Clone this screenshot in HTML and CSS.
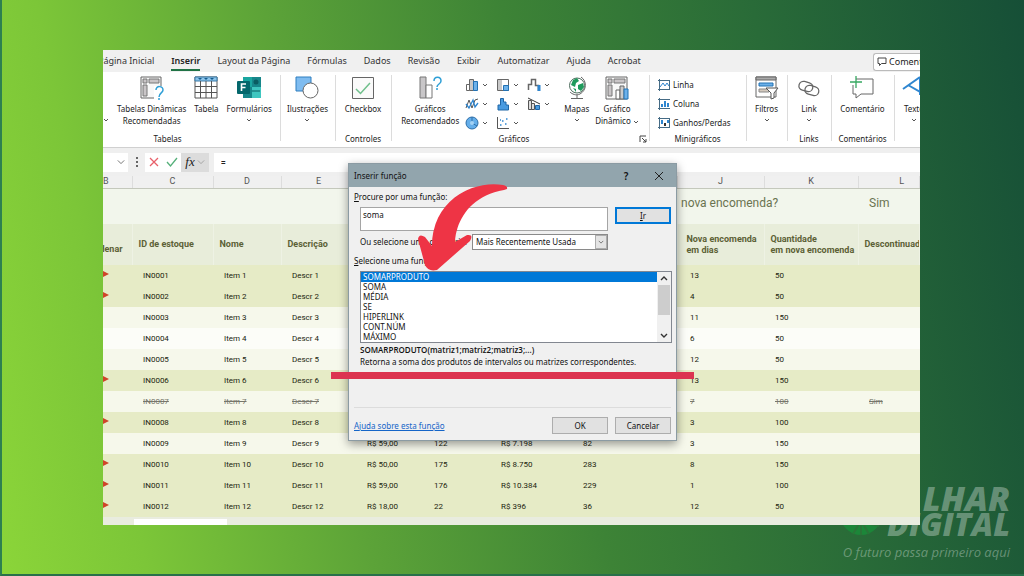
FILE: index.html
```html
<!DOCTYPE html>
<html lang="pt-BR">
<head>
    <meta charset="UTF-8">
    <meta name="viewport" content="width=device-width, initial-scale=1.0">
    <title>Excel - Inserir função</title>
    <link rel="stylesheet" href="styles.css">
</head>
<body>
    <!-- Shared chevron -->
    <svg class="defs" width="0" height="0">
        <symbol id="chev" viewBox="0 0 6 4"><path d="M1 1l2 2 2-2" fill="none" stroke="currentColor"/></symbol>
    </svg>

    <div class="brand">
        <svg class="brand-ball" viewBox="0 0 44 44"><circle cx="22" cy="22" r="21" fill="#17923a"/><path d="M4 26l36 8M10 8l20 34M34 8L14 42M22 1v42" stroke="#2b7a38" stroke-width="2"/></svg>
        <div class="brand-name brand-top">LHAR</div>
        <div class="brand-name">DIGITAL</div>
        <div class="brand-tag">O futuro passa primeiro aqui</div>
    </div>

    <main class="window">
        <nav class="tabs">
            <a href="#">Página Inicial</a>
            <a href="#" class="active">Inserir</a>
            <a href="#">Layout da Página</a>
            <a href="#">Fórmulas</a>
            <a href="#">Dados</a>
            <a href="#">Revisão</a>
            <a href="#">Exibir</a>
            <a href="#">Automatizar</a>
            <a href="#">Ajuda</a>
            <a href="#">Acrobat</a>
            <button class="comments-btn">
                <svg width="10" height="10" viewBox="0 0 10 10"><path d="M1 1h8v5.500H4.500L2.500 8.500v-2H1z" fill="none" stroke="#444"/></svg>
                Comentários
            </button>
        </nav>

        <div class="ribbon">
            <section class="group group-tables">
                <div class="items">
                    <button class="tool tool-cut" aria-label="Tabela Dinâmica"><svg class="chev"><use href="#chev"/></svg></button>
                    <button class="tool">
                        <svg class="icon" viewBox="0 0 24 24">
                            <path d="M1 1h20v21H1z" fill="#f8f8f8" stroke="#666"/>
                            <path d="M3 3h4v4H3zM9 3h10v4H9zM3 9h4v11H3z" fill="#c9c5c7" stroke="#777"/>
                            <path d="M14 10h11v14H14z" fill="#fff"/>
                            <path d="M16 14c0-5 7-4 7 0 0 3-4 3-4 7M19 22v2" fill="none" stroke="#2f9fd6" stroke-width="1.500"/>
                        </svg>
                        <span>Tabelas Dinâmicas<br>Recomendadas</span>
                    </button>
                    <button class="tool">
                        <svg class="icon" viewBox="0 0 24 24">
                            <path d="M1 1h22v21H1z" fill="#fff" stroke="#555"/>
                            <path d="M1 1h22v4H1z" fill="#8cc4ea" stroke="#3b7aa8"/>
                            <path d="M1 10.500h22M1 16.500h22M6.500 5v17M12 5v17M17.500 5v17" stroke="#555" fill="none"/>
                            <path d="M4 2l2 2 2-2zM10 2l2 2 2-2zM16 2l2 2 2-2z" fill="#135b8e"/>
                        </svg>
                        <span>Tabela</span>
                    </button>
                    <button class="tool">
                        <svg class="icon" viewBox="0 0 24 24">
                            <path d="M6 1h18v21H6z" fill="#17868a"/>
                            <path d="M6 1h9v10H6z" fill="#1aa6a0"/><path d="M15 11h9v11h-9z" fill="#3fc6c0"/>
                            <circle cx="19" cy="6" r="2.500" fill="#0a5d62"/><path d="M15 15h8" stroke="#0a5d62"/>
                            <rect x="0" y="5" width="13" height="13" rx="1" fill="#04676c"/>
                            <path d="M4.500 15V8H9M4.500 11.500h4" fill="none" stroke="#fff" stroke-width="1.600"/>
                        </svg>
                        <span>Formulários</span>
                        <svg class="chev"><use href="#chev"/></svg>
                    </button>
                </div>
                <h2>Tabelas</h2>
            </section>

            <section class="group group-illus">
                <div class="items">
                    <button class="tool">
                        <svg class="icon" viewBox="0 0 24 24">
                            <path d="M1 1h15v14H1z" fill="#7fbcf0" stroke="#2f7fc0"/>
                            <circle cx="15.500" cy="14.500" r="7.500" fill="#fff" stroke="#666"/>
                        </svg>
                        <span>Ilustrações</span>
                        <svg class="chev"><use href="#chev"/></svg>
                    </button>
                </div>
            </section>

            <section class="group group-controls">
                <div class="items">
                    <button class="tool">
                        <svg class="icon" viewBox="0 0 24 24">
                            <path d="M1.500 1.500h21v21h-21z" fill="#fafafa" stroke="#666"/>
                            <path d="M5 13l4.500 4.500L19 7" fill="none" stroke="#6fbf8b" stroke-width="1.500"/>
                        </svg>
                        <span>Checkbox</span>
                    </button>
                </div>
                <h2>Controles</h2>
            </section>

            <section class="group group-charts">
                <div class="items">
                    <button class="tool">
                        <svg class="icon" viewBox="0 0 24 24">
                            <path d="M2 1h6v21H2z" fill="#c8c6c8" stroke="#777"/>
                            <path d="M8 9h6v13H8z" fill="#fff" stroke="#777"/>
                            <path d="M16 5c0-5 7-5 7 0 0 3-4 3-4 6M19 12v2" fill="none" stroke="#2f9fd6" stroke-width="1.500"/>
                        </svg>
                        <span>Gráficos<br>Recomendados</span>
                    </button>
                    <div class="chart-grid">
                        <button aria-label="Colunas"><svg viewBox="0 0 14 14"><path d="M1.500 6.500h3v6h-3z" fill="#fff" stroke="#666"/><path d="M4.500 1.500h4v11h-4z" fill="#c8c8c8" stroke="#666"/><path d="M8.500 3.500h4v9h-4z" fill="#6db1ea" stroke="#2272b4"/></svg><svg class="chev"><use href="#chev"/></svg></button>
                        <button aria-label="Hierarquia"><svg viewBox="0 0 14 14"><path d="M1.500 1.500h11v11h-11z" fill="#fff" stroke="#666"/><path d="M2 2h4v10H2z" fill="#c8c8c8"/><path d="M7.500 7.500h5v5h-5z" fill="#6db1ea" stroke="#2272b4"/></svg><svg class="chev"><use href="#chev"/></svg></button>
                        <button aria-label="Cascata"><svg viewBox="0 0 14 14"><path d="M1.500 12V6.500h3V1.500h4v6h3V13" fill="none" stroke="#666" stroke-width="1.500"/><path d="M12 7v6" stroke="#2f86d0" stroke-width="3"/></svg><svg class="chev"><use href="#chev"/></svg></button>
                        <button aria-label="Linhas"><svg viewBox="0 0 14 14"><path d="M1 11l3-8 3 8 3-8 3-1" fill="none" stroke="#555"/><path d="M1 7l3 4 4-8 2 7 3-4" fill="none" stroke="#2f86d0" stroke-width="1.300"/></svg><svg class="chev"><use href="#chev"/></svg></button>
                        <button aria-label="Estatística"><svg viewBox="0 0 14 14"><path d="M2 13V8h2.500V1.500h3V5H10v3h2.500v5z" fill="#4a9be0" stroke="#1f66a6"/></svg><svg class="chev"><use href="#chev"/></svg></button>
                        <button aria-label="Combinação"><svg viewBox="0 0 14 14"><path d="M1.500 3.500h3v9h-3zM4.500 6.500h3v6h-3z" fill="#ddd" stroke="#555"/><path d="M8.500 8.500h4v4h-4z" fill="#4a9be0" stroke="#1f66a6"/><path d="M1 1l6 3 6 3" fill="none" stroke="#333"/></svg><svg class="chev"><use href="#chev"/></svg></button>
                        <button aria-label="Pizza"><svg viewBox="0 0 14 14"><circle cx="7" cy="7" r="6" fill="#64aeea" stroke="#2c6ea8"/><path d="M7 1v6l5 3" fill="none" stroke="#2c6ea8"/><circle cx="7" cy="7" r="2" fill="#a4d2f5"/></svg><svg class="chev"><use href="#chev"/></svg></button>
                        <button aria-label="Dispersão"><svg viewBox="0 0 14 14"><path d="M1.500 1v11.500H13" fill="none" stroke="#555"/><path d="M4 9h1.500M6 5h1.500M9 8h1.500M10 3h1.500M4 4h1" stroke="#2f86d0" stroke-width="1.500"/></svg><svg class="chev"><use href="#chev"/></svg></button>
                    </div>
                    <button class="tool">
                        <svg class="icon" viewBox="0 0 24 24">
                            <circle cx="12" cy="9.500" r="7.500" fill="#fff" stroke="#4c6b5c"/>
                            <path d="M8 4l4-2 2 3-3 2-1 4-4-2zM13 9l5-2 1 4-3 4-3-2zM8 12l3 1 0 3z" fill="#1f9a5c"/>
                            <path d="M16 1c6 4 6 13-1 17-4 2-8 0-10-2M12 19v3M6 22.500h12" fill="none" stroke="#666"/>
                        </svg>
                        <span>Mapas</span>
                        <svg class="chev"><use href="#chev"/></svg>
                    </button>
                    <button class="tool">
                        <svg class="icon" viewBox="0 0 24 24">
                            <path d="M1 1h21v22H1z" fill="#f8f8f8" stroke="#666"/>
                            <path d="M3 3h4v4H3zM9 3h11v4H9zM3 9h4v11H3z" fill="#c9c5c7" stroke="#777"/>
                            <path d="M11 14h4v9h-4z" fill="#fff" stroke="#666"/><path d="M15 10h4v13h-4z" fill="#ccc" stroke="#666"/>
                            <path d="M19 13h4v10h-4z" fill="#6db1ea" stroke="#2272b4"/>
                        </svg>
                        <span>Gráfico<br>Dinâmico <svg class="chev"><use href="#chev"/></svg></span>
                    </button>
                </div>
                <h2>Gráficos</h2>
                <button class="launcher" aria-label="Ver todos os gráficos"><svg viewBox="0 0 8 8"><path d="M1 7V1h6M3 3l4 4M7 4v3H4" fill="none" stroke="#444"/></svg></button>
            </section>

            <section class="group group-spark">
                <div class="items items-col">
                    <button><svg viewBox="0 0 12 12"><path d="M1.500 0v12M0 1.500h12M0 10.500h12M11.500 1v10" stroke="#456b85" fill="none"/><path d="M2 8l3-4 2 3 2-3 2 3" fill="none" stroke="#2f86d0"/></svg>Linha</button>
                    <button><svg viewBox="0 0 12 12"><path d="M1.500 0v12M0 1.500h12M0 10.500h12" stroke="#456b85" fill="none"/><path d="M4 9V6M7 9V3M10 9V5" stroke="#2f86d0" stroke-width="2"/></svg>Coluna</button>
                    <button><svg viewBox="0 0 12 12"><path d="M1.500 0v12M0 1.500h12M0 10.500h12M11.500 1v10" stroke="#456b85" fill="none"/><path d="M4 7V3M10 6V3" stroke="#2f86d0" stroke-width="2"/><path d="M7 9V6" stroke="#333" stroke-width="2"/></svg>Ganhos/Perdas</button>
                </div>
                <h2>Minigráficos</h2>
            </section>

            <section class="group group-filters">
                <div class="items">
                    <button class="tool">
                        <svg class="icon" viewBox="0 0 24 24">
                            <path d="M1 1h20v20H1z" fill="#fff" stroke="#666"/><path d="M1 1h20v3H1z" fill="#aaa" stroke="#666"/>
                            <path d="M4 7h14v3H4z" fill="#6db1ea" stroke="#2272b4"/><path d="M4 13h10v3H4z" fill="#d4c9bd" stroke="#888"/>
                            <path d="M11 12h12l-4 5v5l-3 1v-6z" fill="#fff" stroke="#555"/>
                        </svg>
                        <span>Filtros</span>
                        <svg class="chev"><use href="#chev"/></svg>
                    </button>
                </div>
            </section>

            <section class="group group-links">
                <div class="items">
                    <button class="tool">
                        <svg class="icon" viewBox="0 0 24 24">
                            <rect x="2" y="6" width="14" height="9" rx="4.500" transform="rotate(15 9 10)" fill="none" stroke="#666" stroke-width="1.300"/>
                            <rect x="8" y="10" width="14" height="9" rx="4.500" transform="rotate(15 15 14)" fill="none" stroke="#666" stroke-width="1.300"/>
                        </svg>
                        <span>Link</span>
                        <svg class="chev"><use href="#chev"/></svg>
                    </button>
                </div>
                <h2>Links</h2>
            </section>

            <section class="group group-comments">
                <div class="items">
                    <button class="tool">
                        <svg class="icon" viewBox="0 0 24 24">
                            <path d="M6 3h17v15H11l-5 4v-4H3V9" fill="#fff" stroke="#666"/>
                            <path d="M6 0v12M0 6h12" stroke="#37a862" stroke-width="1.300"/>
                        </svg>
                        <span>Comentário</span>
                    </button>
                </div>
                <h2>Comentários</h2>
            </section>

            <section class="group group-text">
                <div class="items">
                    <button class="tool">
                        <svg class="icon" viewBox="0 0 24 24"><path d="M1 13L18 1M6 9l14 8M18 1v18" fill="none" stroke="#2f86d0" stroke-width="2"/></svg>
                        <span>Texto</span>
                        <svg class="chev"><use href="#chev"/></svg>
                    </button>
                </div>
            </section>
        </div>

        <div class="formula-bar">
            <button class="name-box" aria-label="Caixa de nome"><svg viewBox="0 0 10 6"><path d="M1 1l4 4 4-4" fill="none" stroke="#555"/></svg></button>
            <svg class="dots" viewBox="0 0 2 10"><path d="M0 0h2v2H0zM0 4h2v2H0zM0 8h2v2H0z" fill="#666"/></svg>
            <div class="fx-box">
                <button aria-label="Cancelar edição"><svg viewBox="0 0 12 12"><path d="M2 2l8 8M10 2l-8 8" stroke="#e8606a" stroke-width="1.300"/></svg></button>
                <button aria-label="Inserir"><svg viewBox="0 0 12 12"><path d="M1 6l3.500 4L11 2" fill="none" stroke="#55b07a" stroke-width="1.300"/></svg></button>
                <button class="fx"><i>fx</i><svg viewBox="0 0 10 6"><path d="M1 1l4 4 4-4" fill="none" stroke="#999"/></svg></button>
            </div>
            <input class="formula" type="text" value="=" aria-label="Barra de fórmulas">
        </div>

        <table class="sheet">
            <colgroup>
                <col class="c-b"><col class="c-c"><col class="c-d"><col class="c-e"><col class="c-f"><col class="c-g"><col class="c-h"><col class="c-i"><col class="c-j"><col class="c-k"><col>
            </colgroup>
            <thead>
                <tr class="letters"><th class="letter-b">B</th><th>C</th><th>D</th><th>E</th><th>F</th><th>G</th><th>H</th><th>I</th><th>J</th><th>K</th><th class="letter-l">L</th></tr>
                <tr class="question"><td colspan="8"></td><td colspan="2">nova encomenda?</td><td class="answer">Sim</td></tr>
                <tr class="heads">
                    <th><div class="cut">Reordenar</div></th><th>ID de estoque</th><th>Nome</th><th>Descrição</th><th></th><th></th><th></th><th></th><th class="days">Nova encomenda<br>em dias</th><th>Quantidade<br>em nova encomenda</th><th>Descontinuado</th>
                </tr>
            </thead>
            <tbody id="rows"></tbody>
        </table>
        <div class="scroll-strip"><div class="scroll-thumb"></div></div>

        <div class="dialog" role="dialog" aria-labelledby="dialog-title">
            <div class="dialog-title">
                <span id="dialog-title">Inserir função</span>
                <button class="help" aria-label="Ajuda">?</button>
                <button aria-label="Fechar"><svg viewBox="0 0 10 10"><path d="M1 1l8 8M9 1L1 9" stroke="#222"/></svg></button>
            </div>
            <div class="dialog-body">
                <label for="search"><u>P</u>rocure por uma função:</label>
                <div class="search-row">
                    <textarea id="search">soma</textarea>
                    <button class="btn btn-default"><u>I</u>r</button>
                </div>
                <div class="category-row">
                    <label for="category">Ou selecione uma categoria:</label>
                    <div class="select-wrap">
                        <select id="category"><option>Mais Recentemente Usada</option></select>
                        <span class="select-arrow"><svg viewBox="0 0 8 5"><path d="M1 1l3 3 3-3" fill="none" stroke="#555"/></svg></span>
                    </div>
                </div>
                <div class="list-label" id="list-label"><u>S</u>elecione uma função:</div>
                <div class="listbox">
                    <ul role="listbox" aria-labelledby="list-label">
                        <li role="option" aria-selected="true" class="selected">SOMARPRODUTO</li>
                        <li role="option">SOMA</li>
                        <li role="option">MÉDIA</li>
                        <li role="option">SE</li>
                        <li role="option">HIPERLINK</li>
                        <li role="option">CONT.NÚM</li>
                        <li role="option">MÁXIMO</li>
                    </ul>
                    <div class="scrollbar">
                        <svg viewBox="0 0 8 5"><path d="M1 4l3-3 3 3" fill="none" stroke="#333" stroke-width="1.400"/></svg>
                        <div class="thumb"></div>
                        <svg viewBox="0 0 8 5"><path d="M1 1l3 3 3-3" fill="none" stroke="#333" stroke-width="1.400"/></svg>
                    </div>
                </div>
                <p class="syntax">SOMARPRODUTO(matriz1;matriz2;matriz3;...)</p>
                <p class="syntax-text">Retorna a soma dos produtos de intervalos ou matrizes correspondentes.</p>
                <div class="dialog-footer">
                    <a href="#">Ajuda sobre esta função</a>
                    <button class="btn">OK</button>
                    <button class="btn">Cancelar</button>
                </div>
            </div>
        </div>

        <!-- Annotations drawn over the dialog -->
        <svg class="arrow" viewBox="0 0 92 88"><path d="M90 5Q91 2 86 1C56-4 15 16 15 62L8 53Q2 49 1 55L8 81Q11 88 20 86L53 57Q57 50 50 51L38 58C39 38 52 12 87 6Z" fill="#ee3445"/></svg>
        <div class="underline"></div>
    </main>

    <script>
        // flag, id, nome, descrição, preço, qtd, valor, nível, dias, qtd encomenda, descontinuado
        const rows = [
            [1, 'IN0001', 'Item 1', 'Descr 1', '', '', '', '', '13', '50', ''],
            [1, 'IN0002', 'Item 2', 'Descr 2', '', '', '', '', '4', '50', ''],
            [0, 'IN0003', 'Item 3', 'Descr 3', '', '', '', '', '11', '150', ''],
            [0, 'IN0004', 'Item 4', 'Descr 4', '', '', '', '', '6', '50', ''],
            [0, 'IN0005', 'Item 5', 'Descr 5', '', '', '', '', '12', '50', ''],
            [1, 'IN0006', 'Item 6', 'Descr 6', '', '', '', '', '13', '150', ''],
            [0, 'IN0007', 'Item 7', 'Descr 7', '', '', '', '', '7', '100', 'Sim'],
            [1, 'IN0008', 'Item 8', 'Descr 8', '', '', '', '', '3', '100', ''],
            [0, 'IN0009', 'Item 9', 'Descr 9', 'R$ 59,00', '122', 'R$ 7.198', '82', '3', '150', ''],
            [1, 'IN0010', 'Item 10', 'Descr 10', 'R$ 50,00', '175', 'R$ 8.750', '283', '8', '150', ''],
            [1, 'IN0011', 'Item 11', 'Descr 11', 'R$ 59,00', '176', 'R$ 10.384', '229', '1', '100', ''],
            [1, 'IN0012', 'Item 12', 'Descr 12', 'R$ 18,00', '22', 'R$ 396', '36', '12', '50', '']
        ];

        document.getElementById('rows').innerHTML = rows.map(([flag, ...cells]) => `
            <tr class="${flag ? 'reorder' : ''} ${cells[9] ? 'discontinued' : ''}">
                <td class="flag-cell">${flag ? '<span class="flag"></span>' : ''}</td>
                ${cells.map(cell => `<td>${cell}</td>`).join('')}
            </tr>
        `).join('');
    </script>
</body>
</html>
```
FILE: styles.css
```css
:root {
    --ui: "Noto Sans", "Open Sans", sans-serif;
    --grid: Roboto, "Liberation Sans", sans-serif;
    --red: #dc3450;
    --blue: #0078d7;
}

* {
    margin: 0;
    padding: 0;
    box-sizing: border-box;
}

html {
    min-height: 100%;
    background: linear-gradient(79deg, #8bd539 0%, #7cc638 13%, #5ca338 33%, #3d8336 54%, #296b38 76%, #164f37 100%);
}

body {
    position: relative;
    min-height: 100vh;
    padding: 50px 104px 49px 101px;
    border-left: 2px solid #2d8050;
    border-bottom: 2px solid #28704a;
    font-family: var(--ui);
    font-size: 8px;
    line-height: 12px;
    color: #222;
    overflow: hidden;
}

button, input, select, textarea {
    font: inherit;
    color: inherit;
    background: none;
    border: none;
    border-radius: 0;
}

.defs {
    position: absolute;
}

.chev {
    width: 6px;
    height: 4px;
    color: #555;
}

/* Brand mark in the corner, partly behind the window */
.brand {
    position: absolute;
    right: 14px;
    bottom: 14px;
    text-align: right;
    color: rgba(255, 255, 255, 0.32);
}

.brand-ball {
    position: absolute;
    left: -4px;
    top: 6px;
    width: 44px;
    height: 44px;
    opacity: 0.7;
}

.brand-name {
    font-family: "Open Sans", sans-serif;
    font-size: 32px;
    line-height: 25px;
    font-weight: 800;
    font-style: italic;
}

.brand-top {
    font-size: 34px;
}

.brand-tag {
    margin-top: 8px;
    font-family: "Open Sans", sans-serif;
    font-size: 13px;
    line-height: 16px;
    font-style: italic;
}

/* Excel window */
.window {
    position: relative;
    background: #f0f0f0;
}

.tabs {
    display: flex;
    align-items: center;
    gap: 17px;
    height: 22px;
    padding-top: 1px;
    font-size: 9px;
    white-space: nowrap;
    overflow: hidden;
}

.tabs a {
    color: #333;
    text-decoration: none;
    line-height: 16px;
    border-bottom: 2px solid transparent;
}

.tabs a:first-child {
    margin-left: -5px;
}

.tabs .active {
    font-weight: 600;
    color: #222;
    border-color: #217346;
}

.comments-btn {
    flex: 0 0 47px;
    display: flex;
    align-items: center;
    gap: 2px;
    height: 18px;
    margin-left: auto;
    padding-left: 3px;
    overflow: hidden;
    background: #fff;
    border: 1px solid #bbb;
    border-right: none;
    border-radius: 3px 0 0 3px;
}

.comments-btn svg {
    flex-shrink: 0;
}

.ribbon {
    display: flex;
    height: 76px;
    background: #fff;
    border-bottom: 1px solid #d0d0d0;
    overflow: hidden;
}

.group {
    position: relative;
    flex-shrink: 0;
    display: flex;
    flex-direction: column;
    justify-content: space-between;
    padding: 3px 0 2px;
}

.group + .group::before {
    content: "";
    position: absolute;
    left: 0;
    top: 3px;
    bottom: 6px;
    border-left: 1px solid #dcdcdc;
}

.group h2 {
    font-size: 8px;
    font-weight: 400;
    text-align: center;
}

.group-tables { width: 177px; }
.group-tables h2 { padding-right: 48px; }
.group-illus { width: 55px; }
.group-controls { width: 56px; }
.group-charts { width: 258px; }
.group-charts h2 { padding-right: 12px; }
.group-spark { width: 97px; }
.group-filters { width: 41px; }
.group-links { width: 44px; }
.group-comments { width: 63px; }
.group-text { width: 40px; }

.items {
    display: flex;
    justify-content: center;
    gap: 6px;
}

.group-tables .items {
    justify-content: flex-start;
    gap: 8px;
}

.tool {
    display: flex;
    flex-direction: column;
    align-items: center;
    white-space: nowrap;
}

.tool .icon {
    width: 24px;
    height: 24px;
    margin: 1px 0 3px;
}

.tool > .chev {
    margin-top: 3px;
}

.tool-cut {
    padding-top: 40px;
}

.chart-grid {
    display: grid;
    grid-template-columns: repeat(3, 31px);
    grid-auto-rows: 19px;
}

.chart-grid button {
    display: flex;
    align-items: center;
    gap: 3px;
}

.chart-grid button svg:first-child {
    width: 14px;
    height: 14px;
}

.launcher {
    position: absolute;
    right: 2px;
    bottom: 4px;
    width: 8px;
    height: 8px;
}

.launcher svg {
    display: block;
}

.items-col {
    flex-direction: column;
    gap: 0;
    padding-left: 9px;
}

.items-col button {
    display: flex;
    align-items: center;
    gap: 3px;
    height: 19px;
}

.items-col svg {
    width: 12px;
    height: 12px;
}

/* Formula bar */
.formula-bar {
    display: flex;
    align-items: center;
    height: 28px;
    background: #efefef;
}

.name-box {
    width: 25px;
    height: 19px;
    padding-right: 3px;
    background: #fff;
    text-align: right;
}

.formula-bar button svg {
    width: 8px;
    height: 6px;
}

.formula-bar .dots {
    width: 2px;
    height: 10px;
    margin: 0 7px 0 8px;
}

.fx-box {
    display: flex;
    height: 19px;
    background: #fff;
}

.fx-box button {
    display: flex;
    align-items: center;
    justify-content: center;
    width: 18px;
}

.fx-box button:not(.fx) svg {
    width: 12px;
    height: 12px;
}

.fx-box .fx {
    width: 28px;
    gap: 2px;
    background: #dcdcdc;
    font-family: "Liberation Serif", serif;
    font-size: 13px;
}

.formula {
    flex: 1;
    min-width: 0;
    height: 19px;
    margin-left: 5px;
    padding-left: 7px;
    background: #fff;
    font-weight: 600;
}

/* Sheet */
.sheet {
    width: 100%;
    table-layout: fixed;
    border-collapse: collapse;
    font-family: var(--grid);
    color: #22240f;
}

.c-b { width: 29px; }
.c-c { width: 81px; }
.c-d { width: 68px; }
.c-e { width: 75px; }
.c-f, .c-g { width: 67px; }
.c-h { width: 82px; }
.c-i { width: 105px; }
.c-j { width: 87px; }
.c-k { width: 94px; }

.sheet th, .sheet td {
    text-align: left;
    white-space: nowrap;
    overflow: hidden;
}

.letters th {
    height: 12px;
    line-height: 11px;
    font-size: 9px;
    font-weight: 400;
    text-align: center;
    color: #555;
    background: #f0f0f0;
    border-right: 1px solid #ddd;
    border-bottom: 1px solid #c4c8bc;
}

.letters .letter-b {
    text-align: left;
}

.letters .letter-l {
    padding-left: 26px;
}

.question td {
    height: 36px;
    padding: 0 4px 6px;
    background: #f2f6ec;
    color: #6a7350;
    font-size: 12px;
}

.question .answer {
    padding-left: 11px;
}

.heads th {
    height: 41px;
    padding-left: 6px;
    background: #e8edda;
    border-right: 1px solid #eef2e4;
    color: #5c6136;
    font-size: 9px;
    line-height: 11px;
}

.heads .days {
    padding-left: 9px;
}

.heads .cut {
    display: flex;
    justify-content: flex-end;
    padding: 10px 9px 0 0;
}

.sheet tbody td {
    height: 21px;
    padding-left: 11px;
    background: #f6f8eb;
}

.sheet tbody td:nth-child(9) {
    padding-left: 13px;
}

.sheet tbody tr:nth-child(4) td {
    background: #fcfdf8;
}

.sheet tbody .reorder td {
    background: #e6ebc6;
}

.sheet .discontinued {
    color: #77776c;
    text-decoration: line-through;
}

.sheet tbody .flag-cell {
    padding: 0 0 3px;
}

.flag {
    display: block;
    width: 0;
    border-left: 6px solid #cf4428;
    border-top: 3px solid transparent;
    border-bottom: 3px solid transparent;
}

.scroll-strip {
    height: 8px;
    padding-top: 2px;
    background: #e9ecdf;
}

.scroll-thumb {
    width: 93px;
    height: 6px;
    margin-left: 31px;
    background: #fff;
}

/* Insert function dialog */
.dialog {
    position: absolute;
    left: 245px;
    top: 113px;
    width: 329px;
    background: #f0f0f0;
    border: 1px solid #8b9ba3;
    box-shadow: 0 3px 9px rgba(0, 0, 0, 0.4);
    color: #111;
    line-height: 10px;
}

.dialog-title {
    display: flex;
    align-items: center;
    height: 23px;
    padding: 0 12px 0 5px;
    background: #92a5ad;
}

.dialog-title span {
    flex: 1;
}

.dialog-title button {
    width: 10px;
    height: 10px;
    margin-left: 23px;
}

.dialog-title svg {
    display: block;
}

.dialog-title .help {
    font-size: 10px;
    font-weight: 600;
}

.dialog-body {
    padding: 5px 5px 6px;
}

.search-row, .category-row, .listbox {
    margin-left: 6px;
}

.search-row {
    display: flex;
    align-items: flex-start;
    gap: 7px;
    margin-top: 5px;
}

.search-row textarea {
    flex: 1;
    height: 24px;
    padding: 2px;
    background: #fff;
    border: 1px solid #a5a5a5;
    resize: none;
    overflow: hidden;
}

.btn {
    width: 56px;
    height: 17px;
    background: #e1e1e1;
    border: 1px solid #adadad;
}

.btn-default {
    border: 2px solid var(--blue);
}

.category-row {
    display: flex;
    align-items: center;
    justify-content: space-between;
    margin: 3px 63px 0 6px;
    white-space: nowrap;
}

.select-wrap {
    position: relative;
    width: 136px;
}

.select-wrap select {
    display: block;
    width: 100%;
    height: 16px;
    padding-left: 3px;
    appearance: none;
    background: #fff;
    border: 1px solid #8a8a8a;
}

.select-arrow {
    position: absolute;
    right: 1px;
    top: 1px;
    display: flex;
    width: 12px;
    height: 14px;
    padding: 2px;
    background: #e4e4e4;
    border: 1px solid #adadad;
    pointer-events: none;
}

.list-label {
    margin-top: 6px;
}

.listbox {
    display: flex;
    margin-top: 5px;
    margin-right: -1px;
    height: 72px;
    background: #fff;
    border: 1px solid #828790;
}

.listbox ul {
    flex: 1;
    list-style: none;
    overflow: hidden;
}

.listbox li {
    padding-left: 2px;
}

.listbox .selected {
    background: var(--blue);
    color: #fff;
}

.scrollbar {
    display: flex;
    flex-direction: column;
    align-items: center;
    width: 14px;
    padding: 4px 1px;
    background: #f0f0f0;
}

.scrollbar svg {
    width: 8px;
    height: 5px;
}

.scrollbar .thumb {
    width: 100%;
    height: 30px;
    margin: 4px 0 auto;
    background: #cdcdcd;
}

.syntax, .syntax-text {
    margin: 2px 0 0 6px;
}

.syntax {
    font-family: "Open Sans", sans-serif;
    font-weight: 600;
}

.dialog-footer {
    display: flex;
    align-items: center;
    gap: 7px;
    margin-top: 40px;
    padding-top: 9px;
    border-top: 1px solid #dcdcdc;
}

.dialog-footer a {
    margin-right: auto;
    color: #1565c8;
}

/* Annotations */
.arrow {
    position: absolute;
    left: 314px;
    top: 134px;
    width: 92px;
    height: 88px;
}

.underline {
    position: absolute;
    left: 228px;
    top: 322px;
    width: 363px;
    height: 7px;
    background: var(--red);
}
```
